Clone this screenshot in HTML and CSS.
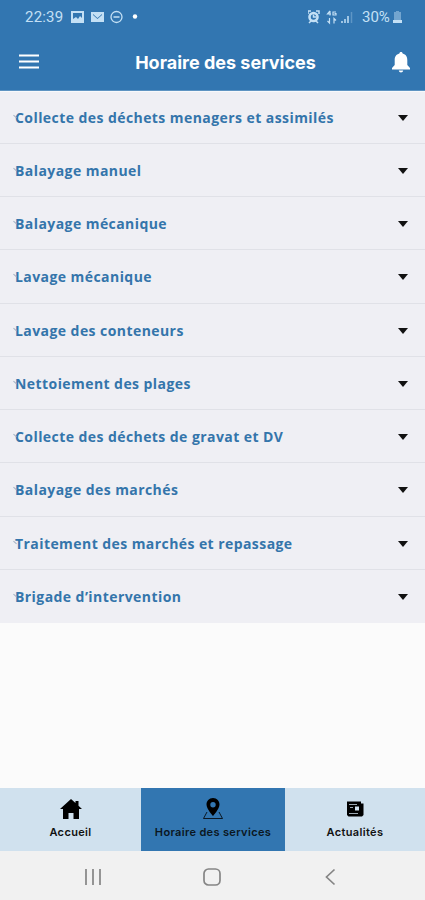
FILE: index.html
```html
<!DOCTYPE html>
<html lang="fr">
<head>
<meta charset="utf-8">
<title>Horaire des services</title>
<link rel="stylesheet" href="styles.css">
</head>
<body>
<header class="top">
  <div class="status">
    <span class="clock">22:39</span>
    <svg class="status-left" width="68" height="14" viewBox="0 0 68 14">
      <path fill="currentColor" fill-rule="evenodd" d="M0 1h13v12H0zM2 3v6l3-2 2 2 2-3 2 2V3zM20 2h13v10H20zM22 4l4.500 4L31 4v1l-4.500 4L22 5z"/>
      <circle cx="45.500" cy="7" r="5.500" fill="none" stroke="currentColor" stroke-width="1.300"/>
      <path d="M42.500 7h6" stroke="currentColor" stroke-width="1.500"/>
      <circle cx="64" cy="6.500" r="2.200" fill="#fff"/>
    </svg>
    <svg class="status-right" width="48" height="16" viewBox="0 0 48 16">
      <circle cx="5.500" cy="8" r="4" fill="none" stroke="currentColor" stroke-width="2.600"/>
      <path d="M0 5V2h3M8 2h3v3M1 14l2-2M10 14l-2-2M5.500 5.500V8H8" fill="none" stroke="currentColor" stroke-width="1.500"/>
      <path d="M22 2v4.500M23 5h-3.500L22 2M28 3h-3v3h3V4.500h-1.500M21.500 9v5l-2-2M26 14.500v-5l2 2" fill="none" stroke="currentColor" stroke-width="1.200"/>
      <path d="M34 12v2M37 10v4M40 7v7" stroke="currentColor" stroke-width="1.500"/>
      <path d="M43.500 3v11" stroke="currentColor" stroke-width="1.500" opacity=".3"/>
    </svg>
    <span class="percent">30%</span>
    <svg width="9" height="14" viewBox="0 0 9 14"><path d="M3 1h3v1h2v8H1V2h2z" fill="currentColor" opacity=".45"/><path d="M0 10h9v3H0z" fill="currentColor"/></svg>
  </div>
  <div class="bar">
    <svg width="20" height="16" viewBox="0 0 20 16"><path d="M0 1.500h20M0 7.500h20M0 13.500h20" stroke="#fff" stroke-width="1.900"/></svg>
    <h1>Horaire des services</h1>
    <svg width="18" height="22" viewBox="0 0 18 22"><path fill="#fff" d="M9 1c1 0 1.600.7 1.600 1.600C14 3.400 15.300 6 15.300 9v5L18 17v1.500H0V17l2.700-3v-5C2.700 6 4 3.400 7.400 2.600 7.400 1.700 8 1 9 1zM6.800 19.500h4.400C11 22 7 22 6.800 19.500z"/></svg>
  </div>
</header>
<main class="list">
  <div class="row"><span class="label">Collecte des déchets menagers et assimilés</span><i class="caret"></i></div>
  <div class="row"><span class="label">Balayage manuel</span><i class="caret"></i></div>
  <div class="row"><span class="label">Balayage mécanique</span><i class="caret"></i></div>
  <div class="row"><span class="label">Lavage mécanique</span><i class="caret"></i></div>
  <div class="row"><span class="label">Lavage des conteneurs</span><i class="caret"></i></div>
  <div class="row"><span class="label">Nettoiement des plages</span><i class="caret"></i></div>
  <div class="row"><span class="label">Collecte des déchets de gravat et DV</span><i class="caret"></i></div>
  <div class="row"><span class="label">Balayage des marchés</span><i class="caret"></i></div>
  <div class="row"><span class="label">Traitement des marchés et repassage</span><i class="caret"></i></div>
  <div class="row"><span class="label">Brigade d’intervention</span><i class="caret"></i></div>
</main>
<nav class="tabs">
  <div class="tab">
    <svg width="22" height="22" viewBox="0 0 22 22"><path d="M11 1l4.500 4V3h3v4.700L22 11h-3v10h-5.500v-6h-5v6H3V11H0z"/></svg>
    <span>Accueil</span>
  </div>
  <div class="tab active">
    <svg width="22" height="22" viewBox="0 0 22 22"><path fill-rule="evenodd" d="M11 0c4 0 6.500 3 6.500 6.500C17.500 11 11 18 11 18S4.500 11 4.500 6.500C4.500 3 7 0 11 0zm0 4a2.700 2.700 0 1 0 0 5.400A2.700 2.700 0 0 0 11 4z"/><path d="M5 14l-3.500 6.500h19L17 14" fill="none" stroke="#000" stroke-width=".8"/></svg>
    <span>Horaire des services</span>
  </div>
  <div class="tab">
    <svg width="22" height="22" viewBox="0 0 22 22"><path fill-rule="evenodd" d="M3 3.500h14v2h2.500V17l-1.500 1.500H4.500L3 17zM11 8.500v4h4v-4zM5 6v.7h8V6zM5 15v.8h9V15zM6 9v.7h3V9z"/></svg>
    <span>Actualités</span>
  </div>
</nav>
<footer class="system">
  <svg width="18" height="18" viewBox="0 0 18 18"><path d="M2 1v16M9 1v16M16 1v16"/></svg>
  <svg width="18" height="18" viewBox="0 0 18 18"><rect x="1" y="1" width="16" height="16" rx="4.500"/></svg>
  <svg width="18" height="18" viewBox="0 0 18 18"><path d="M12.500 1.500L4.500 9l8 7.500"/></svg>
</footer>
</body>
</html>
```
FILE: styles.css
```css
* { box-sizing: border-box; }
body {
  margin: 0;
  width: 425px;
  height: 900px;
  display: flex;
  flex-direction: column;
  background: #fbfbfb;
  font-family: Inter, "Open Sans", sans-serif;
  overflow: hidden;
}
svg { display: block; flex: none; }
.top { height: 91px; background: #3276b1; border-bottom: 1px solid #5e94c2; }
.status {
  height: 34px;
  display: flex;
  align-items: center;
  padding: 0 23px 0 25px;
  color: #c4e0f5;
  font: 15px Roboto, sans-serif;
}
.clock { width: 46px; letter-spacing: .2px; }
.status-right { margin-left: auto; }
.percent { width: 31px; margin-left: 6px; }
.bar {
  height: 56px;
  display: flex;
  align-items: center;
  justify-content: space-between;
  padding: 0 15px 0 19px;
}
h1 { margin: 1px 0 0 20px; font-size: 18px; line-height: 26px; color: #fff; white-space: nowrap; }
.list { background: #efeff4; border-top: 1px solid #f8f9fb; }
.row {
  height: 53.300px;
  display: flex;
  align-items: center;
  justify-content: space-between;
  padding: 1.600px 17px 0 15px;
  border-bottom: 1px solid #e0e1e7;
}
.row:first-child { height: 51.700px; padding-top: 1px; }
.row:last-child { border-bottom: 0; height: 52.900px; }
.label {
  position: relative;
  color: #3475ab;
  font: 700 14px/20px "Open Sans", sans-serif;
  letter-spacing: .430px;
  white-space: nowrap;
}
/* faint tick at the start of each label */
.label::before {
  content: "";
  position: absolute;
  left: -2px;
  top: 8px;
  width: 4px;
  height: 1px;
  background: #a3b1c3;
  transform: rotate(40deg);
}
.caret { border: 5px solid transparent; border-top: 6px solid #111; border-bottom: 0; }
.tabs { display: grid; grid-template-columns: 141px 144px 140px; height: 63px; margin-top: auto; background: #d0e1ee; }
.tab {
  display: flex;
  flex-direction: column;
  align-items: center;
  padding-top: 10px;
  font-size: 11px;
  font-weight: 600;
  line-height: 16px;
  letter-spacing: .350px;
  color: #111;
}
.tab span { margin-top: 4px; white-space: nowrap; }
.active { background: #3276b1; color: #0b1722; }
.system { height: 49px; background: #f1f1f1; display: flex; align-items: center; padding: 2px 85px 0 84px; justify-content: space-between; }
.system svg { fill: none; stroke: #858585; stroke-width: 1.700; }
```
